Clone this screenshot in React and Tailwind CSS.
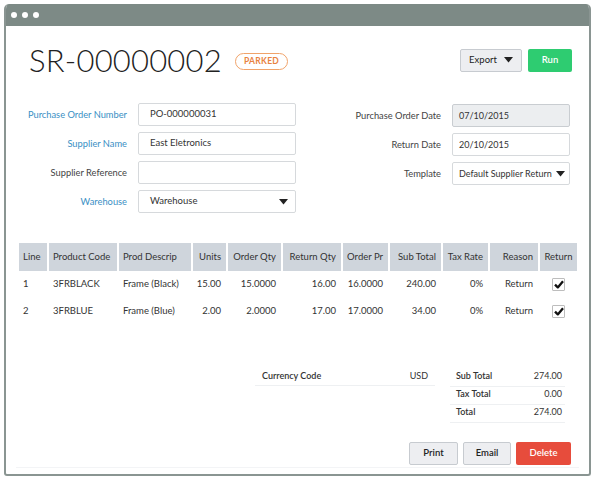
import React from 'react';

const font = { fontFamily: 'Lato, "Open Sans", "Liberation Sans", sans-serif' };

const Caret = () => (
  <svg width="9" height="6" viewBox="0 0 9 6" className="shrink-0">
    <path d="M0 0 L9 0 L4.5 5.5 Z" fill="#222" />
  </svg>
);

const Field = ({ label, blue, value, side, select, grey }) => (
  <div className="flex items-center h-[23px]">
    <div className={`text-right text-[9.3px] pr-[11px] whitespace-nowrap ${side === 'l' ? 'w-[132px]' : 'w-[156px]'} ${blue ? 'text-[#3a8fc4]' : 'text-[#444]'}`}>
      {label}
    </div>
    <div
      className={`h-[23px] flex items-center justify-between border rounded-[2px] text-[#333] whitespace-nowrap ${side === 'l' ? 'w-[158px] pl-[11px] pr-[7px] text-[9.5px]' : 'w-[118px] pl-[6px] pr-[4px] text-[9px]'} ${grey ? 'bg-[#eceef0] border-[#c9cdd1]' : 'bg-white border-[#d6d9dc]'}`}
    >
      <span>{value}</span>
      {select && <Caret />}
    </div>
  </div>
);

const cols = [
  { h: 'Line', a: 'l' },
  { h: 'Product Code', a: 'l' },
  { h: 'Prod Descrip', a: 'l' },
  { h: 'Units', a: 'r' },
  { h: 'Order Qty', a: 'r' },
  { h: 'Return Qty', a: 'r' },
  { h: 'Order Pr', a: 'r' },
  { h: 'Sub Total', a: 'r' },
  { h: 'Tax Rate', a: 'r' },
  { h: 'Reason', a: 'r' },
  { h: 'Return', a: 'c' },
];

const rows = [
  ['1', '3FRBLACK', 'Frame (Black)', '15.00', '15.0000', '16.00', '16.0000', '240.00', '0%', 'Return'],
  ['2', '3FRBLUE', 'Frame (Blue)', '2.00', '2.0000', '17.00', '17.0000', '34.00', '0%', 'Return'],
];

const gridCols = 'grid grid-cols-[28px_68px_72px_33px_53px_58px_45px_51px_45px_48px_37px] gap-x-[2px]';

const align = (a) => (a === 'l' ? 'justify-start pl-[4px]' : a === 'r' ? 'justify-end pr-[5px]' : 'justify-center');

const Check = () => (
  <div className="w-[13px] h-[13px] bg-white border border-[#bdbdbd] rounded-[1px] flex items-center justify-center">
    <svg width="10" height="9" viewBox="0 0 10 9">
      <path d="M1 4.6 L3.8 7.4 L9 1.2" fill="none" stroke="#111" strokeWidth="2.3" strokeLinejoin="round" />
    </svg>
  </div>
);

export default function App() {
  return (
    <div className="w-[595px] h-[480px] bg-white pt-[4px] pl-[4px] pr-[4px]" style={font}>
      <div className="w-[587px] h-[472px] border-2 border-t-0 border-[#8a9592] rounded-t-[5px] rounded-b-[3px] flex flex-col overflow-hidden">
        {/* title bar */}
        <div className="h-[22px] bg-[#7d8a86] flex items-center gap-[5px] pl-[7px] shrink-0 -mx-[2px]">
          <span className="w-[6px] h-[6px] rounded-full bg-white" />
          <span className="w-[6px] h-[6px] rounded-full bg-white" />
          <span className="w-[6px] h-[6px] rounded-full bg-white" />
        </div>

        {/* header */}
        <div className="flex items-center h-[24px] mt-[22px] pl-[23px] pr-[17px]">
          <h1 className="text-[31px] font-light leading-none text-[#222] tracking-[0.2px]">SR-00000002</h1>
          <span className="ml-[13px] mt-[2px] h-[17px] px-[8px] flex items-center border border-[#f0a36a] rounded-full text-[#e8823f] text-[8.5px] font-bold tracking-[0.3px]">
            PARKED
          </span>
          <div className="ml-auto flex gap-[6px]">
            <button className="w-[62px] h-[23px] bg-[#edeef1] border border-[#c7cbd0] rounded-[2px] flex items-center justify-center gap-[7px] text-[9.5px] text-[#222]">
              Export <Caret />
            </button>
            <button className="w-[44px] h-[23px] bg-[#2ecc71] rounded-[2px] text-white text-[9.5px] font-semibold">Run</button>
          </div>
        </div>

        {/* form */}
        <div className="flex mt-[31px]">
          <div className="flex flex-col gap-[6px]">
            <Field label="Purchase Order Number" blue value="PO-000000031" side="l" />
            <Field label="Supplier Name" blue value="East Eletronics" side="l" />
            <Field label="Supplier Reference" value="" side="l" />
            <Field label="Warehouse" blue value="Warehouse" side="l" select />
          </div>
          <div className="flex flex-col gap-[6px] mt-[1px]">
            <Field label="Purchase Order Date" value="07/10/2015" side="r" grey />
            <Field label="Return Date" value="20/10/2015" side="r" />
            <Field label="Template" value="Default Supplier Return" side="r" select />
          </div>
        </div>

        {/* table */}
        <div className="mt-[30px] ml-[13px] text-[9.5px] text-[#333]">
          <div className={`${gridCols} h-[28px]`}>
            {cols.map((c) => (
              <div key={c.h} className={`bg-[#cfd5dc] flex items-center ${align(c.a)} text-[#333]`}>
                {c.h}
              </div>
            ))}
          </div>
          {rows.map((r) => (
            <div key={r[0]} className={`${gridCols} h-[27px]`}>
              {r.map((v, i) => (
                <div key={i} className={`flex items-center ${align(cols[i].a)}`}>
                  {v}
                </div>
              ))}
              <div className="flex items-center justify-center">
                <Check />
              </div>
            </div>
          ))}
        </div>

        {/* totals */}
        <div className="flex mt-[44px] pl-[249px] text-[9px] text-[#333]">
          <div className="w-[180px] self-start flex justify-between px-[7px] h-[17px] items-start border-b border-[#eef0f2]">
            <span className="font-semibold">Currency Code</span>
            <span>USD</span>
          </div>
          <div className="ml-[15px] w-[115px] flex flex-col">
            {[
              ['Sub Total', '274.00'],
              ['Tax Total', '0.00'],
              ['Total', '274.00'],
            ].map(([k, v]) => (
              <div key={k} className="flex justify-between pl-[6px] pr-[3px] h-[17.5px] items-start border-b border-[#eef0f2] mb-[0.5px]">
                <span className="font-semibold">{k}</span>
                <span>{v}</span>
              </div>
            ))}
          </div>
        </div>

        {/* actions */}
        <div className="flex justify-end gap-[5px] mt-auto mb-[6px] mx-[10px] pr-[8px] pb-[2px] border-b border-[#f3f4f6]">
          <button className="w-[49px] h-[23px] bg-[#edeef1] border border-[#c7cbd0] rounded-[2px] text-[9.5px] font-semibold text-[#222]">Print</button>
          <button className="w-[48px] h-[23px] bg-[#edeef1] border border-[#c7cbd0] rounded-[2px] text-[9.5px] font-semibold text-[#222]">Email</button>
          <button className="w-[55px] h-[23px] bg-[#e74c3c] rounded-[2px] text-[9.5px] font-semibold text-white">Delete</button>
        </div>
      </div>
    </div>
  );
}
